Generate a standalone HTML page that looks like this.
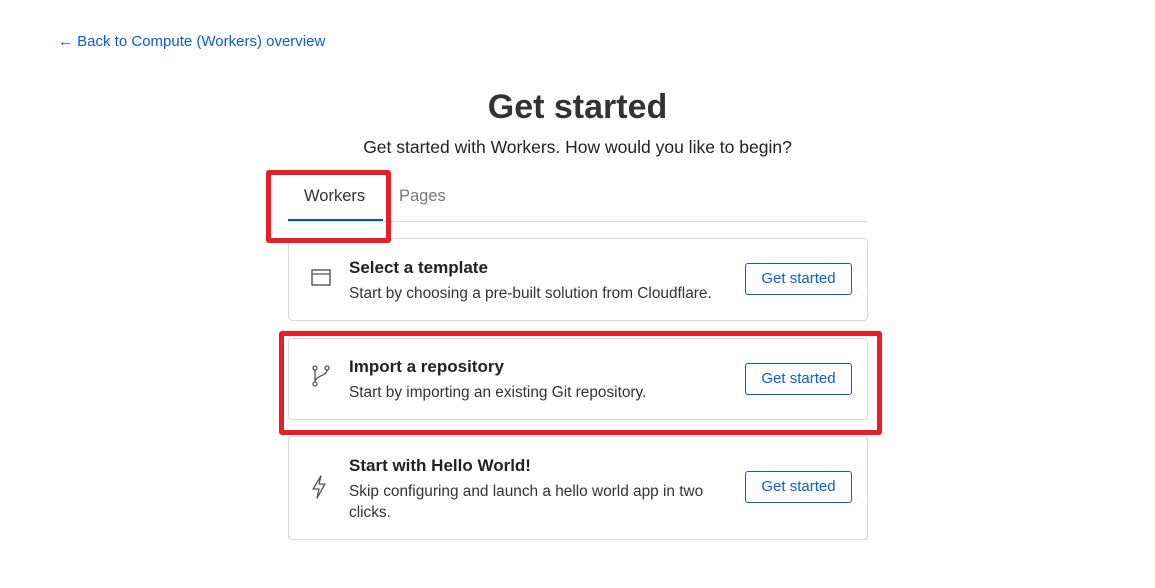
<!DOCTYPE html>
<html><head><style>
body{margin:0;width:1155px;height:588px;background:#fff;font-family:"Liberation Sans",sans-serif;color:#222;position:relative;overflow:hidden}
.a{position:absolute}
.card{position:absolute;left:288px;width:578px;border:1px solid #d9d9d9;border-radius:4px;background:#fff}
.t{position:absolute;left:60px;font-weight:bold;font-size:17px;color:#222}
.d{position:absolute;left:60px;font-size:15.4px;color:#333;line-height:21px}
.btn{position:absolute;left:456px;width:105px;height:30px;border:1px solid #0a5be0;border-radius:3px;color:#0a5be0;font-size:15px;text-align:center;line-height:30px}
.ic{position:absolute;left:22px}
.red{position:absolute;border:5px solid #ec1c24;border-radius:3px}
</style></head><body>
<div class="a" style="left:58px;top:33px;font-size:15px;color:#0a5be0">← Back to Compute (Workers) overview</div>
<div class="a" style="left:0;width:1155px;top:88px;text-align:center;font-size:34px;font-weight:bold;color:#333">Get started</div>
<div class="a" style="left:0;width:1155px;top:137px;text-align:center;font-size:17.5px;color:#222">Get started with Workers. How would you like to begin?</div>
<div class="a" style="left:304px;top:187px;font-size:16.5px;color:#333">Workers</div>
<div class="a" style="left:399px;top:187px;font-size:16.5px;color:#777">Pages</div>
<div class="a" style="left:288px;top:221px;width:579px;height:1px;background:#ddd"></div>
<div class="a" style="left:288px;top:219px;width:95px;height:2px;background:#0a4fc0"></div>

<div class="card" style="top:238px;height:81px">
<svg class="ic" style="top:30px" width="20" height="17" viewBox="0 0 20 17"><rect x="1" y="1" width="18" height="15" fill="none" stroke="#555" stroke-width="1.4"/><line x1="1" y1="5" x2="19" y2="5" stroke="#555" stroke-width="1.2"/></svg>
<div class="t" style="top:19px">Select a template</div>
<div class="d" style="top:44px">Start by choosing a pre-built solution from Cloudflare.</div>
<div class="btn" style="top:24px">Get started</div>
</div>
<div class="card" style="top:338px;height:80px">
<svg class="ic" style="top:26px" width="20" height="22" viewBox="0 0 20 22"><circle cx="4" cy="3" r="2" fill="none" stroke="#555" stroke-width="1.3"/><circle cx="4" cy="19" r="2" fill="none" stroke="#555" stroke-width="1.3"/><circle cx="16" cy="3" r="2" fill="none" stroke="#555" stroke-width="1.3"/><path d="M4 5V17M16 5C16 11 6 10 4 16" fill="none" stroke="#555" stroke-width="1.3"/></svg>
<div class="t" style="top:18px">Import a repository</div>
<div class="d" style="top:43px">Start by importing an existing Git repository.</div>
<div class="btn" style="top:24px">Get started</div>
</div>
<div class="card" style="top:436px;height:102px">
<svg class="ic" style="top:38px" width="16" height="24" viewBox="0 0 16 24"><path d="M10 1L2 14H8L6 23L14 9H8L10 1Z" fill="none" stroke="#555" stroke-width="1.3" stroke-linejoin="round"/></svg>
<div class="t" style="top:19px">Start with Hello World!</div>
<div class="d" style="top:44px;width:365px">Skip configuring and launch a hello world app in two clicks.</div>
<div class="btn" style="top:34px">Get started</div>
</div>

<div class="red" style="left:266px;top:170px;width:115px;height:63px"></div>
<div class="red" style="left:279px;top:331px;width:593px;height:94px"></div>
</body></html>
